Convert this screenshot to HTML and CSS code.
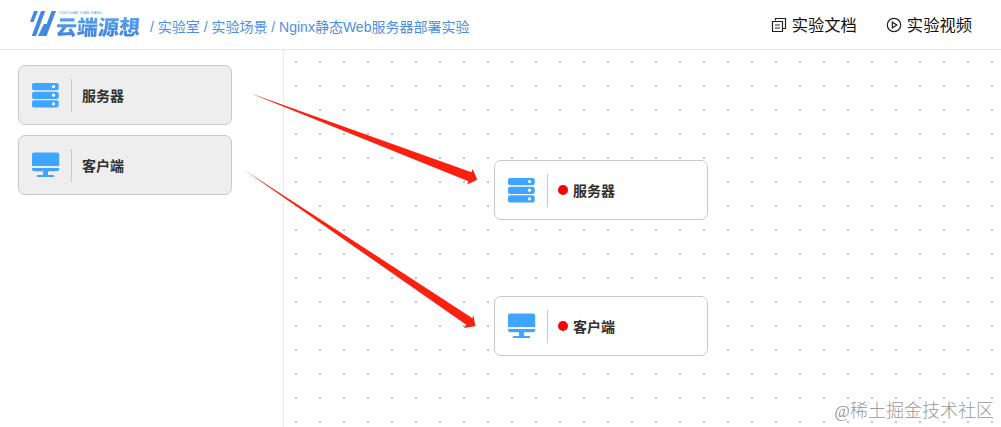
FILE: index.html
```html
<!DOCTYPE html>
<html lang="zh-CN">
<head>
<meta charset="utf-8">
<title>Nginx静态Web服务器部署实验</title>
<link rel="stylesheet" href="styles.css">
</head>
<body>
<svg class="defs" aria-hidden="true">
  <symbol id="server" viewBox="0 0 28 26">
    <g fill="#40a5ff"><rect x="0" y="1" width="26.700" height="7.200" rx="2"/><rect x="0" y="9.700" width="26.700" height="7.200" rx="2"/><rect x="0" y="18.300" width="26.700" height="7.200" rx="2"/></g>
    <g fill="#fff"><circle cx="21.500" cy="4.500" r="1.600"/><circle cx="21.500" cy="13.200" r="1.600"/><circle cx="21.500" cy="21.800" r="1.600"/></g>
  </symbol>
  <symbol id="monitor" viewBox="0 0 28 26">
    <path fill="#40a5ff" d="M2 .5h23.200q2 0 2 2V14H0V2.500Q0 .5 2 .5zM0 16h27.200v.8q0 2.500-2.500 2.500H16V23h6v2H5v-2h6v-3.700H2.500Q0 19.300 0 16.800z"/>
  </symbol>
</svg>
<div class="app">
  <header class="header">
    <div class="logo">
      <svg class="logo-mark" viewBox="0 0 26 26">
        <g fill="#4189e2"><path d="M4 1h4L3.500 12H0zM11 1h4.300L6 26H1.700z"/><path d="M13.800 14h3.700L12 26H8zM21.500 1H26l-9.500 25h-4.300z"/></g>
      </svg>
      <div class="logo-words">
        <span class="logo-pinyin">YUN DUAN YUAN XIANG</span>
        <span class="logo-name">云端源想</span>
      </div>
    </div>
    <nav class="crumbs">/ 实验室 / 实验场景 / Nginx静态Web服务器部署实验</nav>
    <div class="actions">
      <a class="action"><svg viewBox="0 0 16 16"><path fill="none" stroke="#222" stroke-width="1.200" d="M4.500 3.500v-2h10v10h-3M1.500 4.500h10v10h-10zM4 8h5M4 11h5"/></svg>实验文档</a>
      <a class="action"><svg viewBox="0 0 16 16"><g fill="none" stroke="#222" stroke-width="1.200"><circle cx="8" cy="8" r="6.700"/><path d="M6.300 5.200v5.600L10.800 8z"/></g></svg>实验视频</a>
    </div>
  </header>
  <main class="main">
    <aside class="sidebar">
      <div class="card palette"><svg class="icon"><use href="#server"/></svg><span class="label">服务器</span></div>
      <div class="card palette"><svg class="icon"><use href="#monitor"/></svg><span class="label">客户端</span></div>
    </aside>
    <section class="canvas">
      <div class="card node node-server"><svg class="icon"><use href="#server"/></svg><span class="label"><i class="dot"></i>服务器</span></div>
      <div class="card node node-client"><svg class="icon"><use href="#monitor"/></svg><span class="label"><i class="dot"></i>客户端</span></div>
    </section>
  </main>
  <svg class="arrows" viewBox="0 0 1001 427">
    <path d="M251 93.500L471.500 172.300l1.200-3.200L477.300 179.800l-10.200 4.700 1.300-3.300z"/>
    <path d="M242.800 168.900L472.500 318.200l.7-3.500L475.500 326l-11.500 2.100 2.200-3.300z"/>
  </svg>
  <div class="watermark"><span class="at">@</span>稀土掘金技术社区</div>
</div>
</body>
</html>
```
FILE: styles.css
```css
* { box-sizing: border-box; }
body {
  margin: 0;
  background: #fff;
  font-family: "Liberation Sans", "Noto Sans CJK SC", sans-serif;
}
.defs { position: absolute; width: 0; height: 0; }
.app {
  position: relative;
  display: flex;
  flex-direction: column;
  height: 427px;
  overflow: hidden;
}
.header {
  display: flex;
  align-items: center;
  height: 50px;
  padding: 0 29px 0 30px;
  border-bottom: 1px solid #e8e8e8;
}
.logo { display: flex; height: 26px; margin-bottom: 3px; }
.logo-mark { width: 26px; height: 26px; }
.logo-words { display: flex; flex-direction: column; width: 85px; }
.logo-pinyin {
  flex: none;
  height: 6px;
  padding-left: 3px;
  font-size: 3.700px;
  line-height: 7px;
  white-space: nowrap;
  color: #5c9be6;
}
.logo-name {
  flex: none;
  height: 24px;
  font: 900 21px/20px "Noto Sans CJK SC", sans-serif;
  white-space: nowrap;
  color: transparent;
  background: linear-gradient(#5ca3f0, #3a80dc);
  background-clip: text;
  -webkit-background-clip: text;
  transform: skewX(-4deg);
}
.crumbs {
  margin: 5px 0 0 9px;
  font-size: 14px;
  line-height: 20px;
  white-space: nowrap;
  color: #4a90e2;
}
.actions { display: flex; gap: 29px; margin-left: auto; padding-top: 1px; }
.action {
  display: flex;
  align-items: center;
  gap: 5px;
  font-size: 16.300px;
  line-height: 24px;
  color: #111;
}
.action svg { width: 16px; height: 16px; }
.main { display: flex; flex: 1; }
.sidebar {
  display: flex;
  flex-direction: column;
  gap: 10px;
  width: 284px;
  padding: 15px 0 0 18px;
  border-right: 1px solid #e8e8e8;
}
.canvas {
  position: relative;
  flex: 1;
  background: conic-gradient(from 90deg at 22px 22px, #c3c3c3 90deg, transparent 0) -11px -11px / 24px 24px;
}
.card {
  display: flex;
  align-items: center;
  width: 214px;
  height: 60px;
  padding-left: 13px;
  border: 1px solid #c8c8c8;
  border-radius: 7px;
  background: #fff;
}
.palette { background: #eee; }
.node { position: absolute; left: 210px; }
.node-server { top: 110px; }
.node-client { top: 246px; }
.icon { width: 28px; height: 26px; }
.label {
  display: flex;
  align-items: center;
  height: 33px;
  margin-left: 11px;
  padding-left: 10px;
  border-left: 1px solid #c8c8c8;
  font-size: 14px;
  font-weight: bold;
  color: #303030;
}
.dot {
  width: 10px;
  height: 10px;
  margin: -1px 5px 0 0;
  border-radius: 50%;
  background: #f00;
}
.arrows {
  position: absolute;
  top: 0;
  left: 0;
  width: 1001px;
  height: 427px;
  fill: #fb2010;
  pointer-events: none;
}
.watermark {
  position: absolute;
  right: 7px;
  bottom: 3px;
  font-size: 18px;
  font-weight: 300;
  line-height: 24px;
  white-space: nowrap;
  color: #999;
}
.at { font-family: "Liberation Serif", serif; font-size: 17px; }
```
